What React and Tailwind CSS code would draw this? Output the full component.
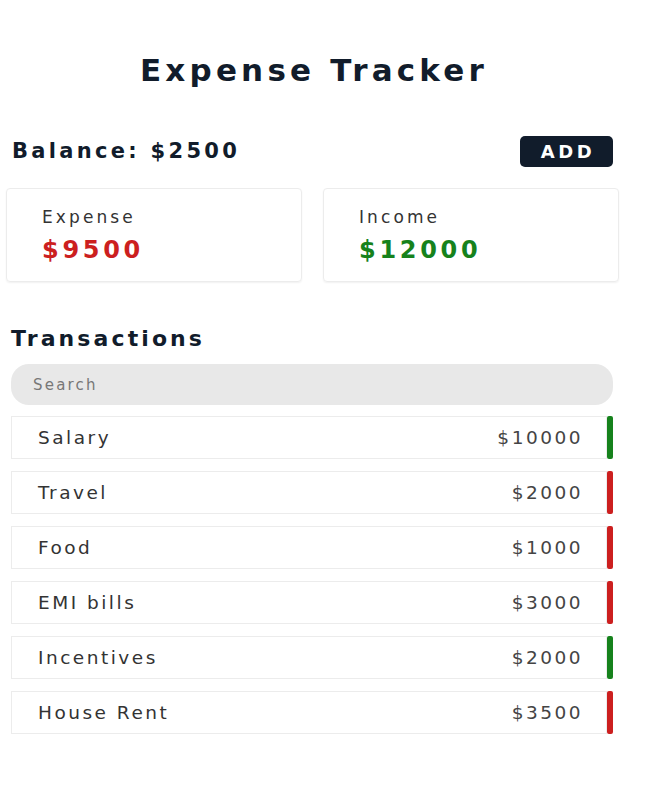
const transactions = [
  { id: 1, name: 'Salary', amount: 10000, type: 'income' },
  { id: 2, name: 'Travel', amount: 2000, type: 'expense' },
  { id: 3, name: 'Food', amount: 1000, type: 'expense' },
  { id: 4, name: 'EMI bills', amount: 3000, type: 'expense' },
  { id: 5, name: 'Incentives', amount: 2000, type: 'income' },
  { id: 6, name: 'House Rent', amount: 3500, type: 'expense' },
];

const App = () => {
  return (
    <div className="w-[650px] min-h-[800px] bg-white font-['DejaVu_Sans',sans-serif] text-[#111c2b]">
      <h1 className="w-[628px] pt-[50px] text-center text-[31px] font-bold leading-[40px] tracking-[4.2px]">
        Expense Tracker
      </h1>

      <div className="mt-[47px] flex h-[28px] w-[613px] items-center justify-between pl-[12px]">
        <h2 className="text-[21px] font-bold leading-[28px] tracking-[3.3px]">Balance: $2500</h2>
        <button
          type="button"
          className="h-[31px] w-[93px] rounded-[5px] bg-[#111c2b] pl-[3px] text-[18px] font-bold tracking-[3.6px] text-white"
        >
          ADD
        </button>
      </div>

      {/* summary cards */}
      <div className="mt-[23px] flex gap-[21px] pl-[6px]">
        <div className="h-[94px] w-[296px] rounded-[4px] border border-[#ececec] pl-[35px] pt-[15px] shadow-[0_1px_2px_rgba(0,0,0,0.06)]">
          <p className="text-[17px] leading-[26px] tracking-[3.1px] text-[#333]">Expense</p>
          <p className="mt-[4px] text-[24px] font-bold leading-[32px] tracking-[3.7px] text-[#cc1f1f]">$9500</p>
        </div>
        <div className="h-[94px] w-[296px] rounded-[4px] border border-[#ececec] pl-[35px] pt-[15px] shadow-[0_1px_2px_rgba(0,0,0,0.06)]">
          <p className="text-[17px] leading-[26px] tracking-[3.1px] text-[#333]">Income</p>
          <p className="mt-[4px] text-[24px] font-bold leading-[32px] tracking-[3.7px] text-[#16821c]">$12000</p>
        </div>
      </div>

      <div className="mt-[42px] pl-[11px]">
        <h2 className="text-[22px] font-bold leading-[30px] tracking-[3.1px]">Transactions</h2>
        <input
          type="text"
          placeholder="Search"
          className="mt-[10px] h-[41px] w-[602px] rounded-[18px] bg-[#e8e8e8] pl-[22px] text-[15px] tracking-[2.2px] text-[#333] outline-none placeholder:text-[#777]"
        />

        <ul className="mt-[11px] flex flex-col gap-[12px]">
          {transactions.map((t) => (
            <li key={t.id} className="flex w-[602px]">
              <div className="flex h-[43px] flex-1 items-center justify-between border border-[#ececec] pl-[26px] pr-[23px] text-[18.5px] tracking-[2.5px] text-[#333]">
                <span>{t.name}</span>
                <span className="text-[#444]">${t.amount}</span>
              </div>
              <div
                className={
                  t.type === 'income'
                    ? 'h-[43px] w-[6px] rounded-[2px] bg-[#16821c]'
                    : 'h-[43px] w-[6px] rounded-[2px] bg-[#cc1f1f]'
                }
              />
            </li>
          ))}
        </ul>
      </div>
    </div>
  );
};

export default App;
